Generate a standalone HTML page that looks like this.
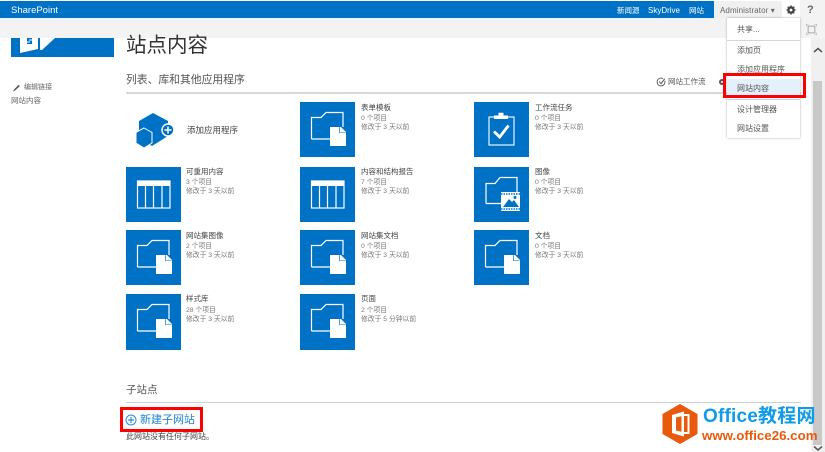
<!DOCTYPE html>
<html lang="zh"><head><meta charset="utf-8"><style>
html,body{margin:0;padding:0}
body{width:825px;height:452px;position:relative;overflow:hidden;background:#fff;font-family:"Liberation Sans","Noto Sans CJK SC",sans-serif;color:#444}
#w{position:absolute;left:0;top:0;width:825px;height:452px;overflow:hidden;filter:blur(.3px)}
.a{position:absolute;white-space:nowrap}
.tile{position:absolute;width:55px;height:55px;background:#0072c6}
.tile svg{position:absolute;left:0;top:0}
.t{position:absolute;font-size:7.500px;line-height:10px;color:#444;white-space:nowrap}
.s{position:absolute;font-size:6.800px;line-height:9px;color:#777;white-space:nowrap}
.m{position:absolute;left:737px;font-size:8px;line-height:10px;color:#555;white-space:nowrap}
</style></head><body><div id="w">
<svg width="0" height="0" style="position:absolute"><defs>
<g id="doc"><path d="M11.500 37V15.500H21L26 10.500H43V25M11.500 37H30" fill="none" stroke="#fff" stroke-width="1.200"/><path fill="#fff" d="M30 25H41L46 30V44H30Z"/><path fill="#0072c6" d="M40 25.500V30.500H45.500L45.500 31H39.300V25Z"/></g>
<g id="tbl"><rect x="11.500" y="14" width="32.500" height="27" fill="none" stroke="#fff" stroke-width="1.200"/><rect x="11" y="14" width="33" height="5" fill="#fff"/><path d="M19.500 19V41M27.500 19V41M36 19V41" stroke="#fff" stroke-width="1.200"/></g>
</defs></svg>

<div class="a" style="left:0;top:1px;width:714px;height:17px;background:#0072c6"></div>
<div class="a" style="left:0;top:18px;width:825px;height:20px;background:#f3f3f3"></div>
<div class="a" style="left:800px;top:0;width:25px;height:18px;background:#f3f3f3"></div>
<div class="a" style="left:714px;top:1px;width:68px;height:17px;background:#f0f0f0"></div>
<div class="a" style="left:11px;top:4px;font-size:9.500px;line-height:14px;color:#fff">SharePoint</div>
<div class="a" style="left:617px;top:4px;font-size:7.500px;line-height:13px;color:#fff">新闻源</div>
<div class="a" style="left:648px;top:4px;font-size:8px;line-height:13px;color:#fff">SkyDrive</div>
<div class="a" style="left:689px;top:4px;font-size:7.500px;line-height:13px;color:#fff">网站</div>
<div class="a" style="left:720px;top:4px;font-size:8px;line-height:13px;color:#666;letter-spacing:.1px">Administrator ▾</div>
<svg class="a" style="left:786px;top:5px" width="10" height="10" viewBox="0 0 12 12"><circle cx="6" cy="6" r="3.300" fill="none" stroke="#444" stroke-width="2.400"/><path d="M6 .5V11.500M.5 6H11.500M2 2L10 10M10 2L2 10" stroke="#444" stroke-width="1.600"/><circle cx="6" cy="6" r="1.700" fill="#fff"/></svg>
<div class="a" style="left:807px;top:3px;font-size:11px;line-height:14px;font-weight:bold;color:#666">?</div>
<svg class="a" style="left:806px;top:24px" width="11" height="11" viewBox="0 0 13 13" fill="none" stroke="#9a9a9a"><rect x="2.500" y="2.500" width="8" height="8"/><path d="M0 3V0H3M10 0H13V3M13 10V13H10M3 13H0V10" stroke-width="1"/></svg>

<div class="a" style="left:11px;top:38px;width:103px;height:19px;background:#0072c6"></div>
<svg class="a" style="left:20px;top:38px" width="36" height="15" viewBox="0 0 36 15"><path d="M0 0H18V11L0 15Z" fill="#fff"/><path d="M20 0H35L22 12H20Z" fill="#fff"/><path d="M7 0H12V1.500H9V2.500H12V6H7V4.500H10V3.500H7Z" fill="#0072c6"/></svg>

<div class="a" style="left:126px;top:33px;font-size:20.500px;line-height:26px;color:#333">站点内容</div>
<div class="a" style="left:126px;top:73px;font-size:10.800px;line-height:15px;color:#555">列表、库和其他应用程序</div>
<div class="a" style="left:126px;top:92px;width:675px;height:2px;background:#d8d8d8"></div>

<svg class="a" style="left:12px;top:84px" width="9" height="8" viewBox="0 0 9 8"><path d="M1 7.500L2 5.500L6.500 1L8 2L3 6.500Z" fill="#555"/></svg>
<div class="a" style="left:24px;top:83px;font-size:7px;line-height:9px;color:#666">编辑链接</div>
<div class="a" style="left:11px;top:96px;font-size:7.500px;line-height:10px;color:#666">网站内容</div>

<svg class="a" style="left:656px;top:77px" width="10" height="10" viewBox="0 0 12 12" fill="none" stroke="#555"><path d="M10.500 4.500A4.700 4.700 0 1 1 8.500 2"/><path d="M4 5.500L6 8L10.500 2" stroke-width="1.200"/></svg>
<div class="a" style="left:668px;top:77px;font-size:7.500px;line-height:10px;color:#555">网站工作流</div>
<svg class="a" style="left:718px;top:78px" width="8" height="8" viewBox="0 0 8 8"><circle cx="4" cy="4" r="3" fill="#555"/><circle cx="4" cy="4" r="1" fill="#fff"/></svg>

<svg class="a" style="left:136px;top:112px" width="42" height="37" viewBox="0 0 42 37"><path d="M17 1L32 9V24L16 34L3 26V9Z" fill="#0072c6"/><path d="M8 16L16 20.500V31L8 36L0 31V20.500Z" fill="#0072c6" stroke="#fff" stroke-width="1"/><circle cx="32" cy="18" r="6" fill="#0072c6" stroke="#fff" stroke-width="1.500"/><path d="M32 14.500V21.500M28.500 18H35.500" stroke="#fff" stroke-width="1.500"/></svg>
<div class="a" style="left:187px;top:125px;font-size:8.500px;line-height:11px;color:#444">添加应用程序</div>

<div class="tile" style="left:300px;top:102px"><svg width="55" height="55"><use href="#doc"/></svg></div>
<div class="t" style="left:361px;top:103px">表单模板</div><div class="s" style="left:361px;top:114px">0 个项目</div><div class="s" style="left:361px;top:123px">修改于 3 天以前</div>

<div class="tile" style="left:474px;top:102px"><svg width="55" height="55"><rect x="15" y="15" width="25" height="28" fill="none" stroke="#fff" stroke-width="1.100"/><path d="M20 17V13.500H24.500V10.700H29.500V13.500H34V17Z" fill="#fff"/><path d="M20 29.500L25.700 35L34.500 23.500" fill="none" stroke="#fff" stroke-width="2.800"/></svg></div>
<div class="t" style="left:535px;top:103px">工作流任务</div><div class="s" style="left:535px;top:114px">0 个项目</div><div class="s" style="left:535px;top:123px">修改于 3 天以前</div>

<div class="tile" style="left:126px;top:167px"><svg width="55" height="55"><use href="#tbl"/></svg></div>
<div class="t" style="left:186px;top:167px">可重用内容</div><div class="s" style="left:186px;top:178px">3 个项目</div><div class="s" style="left:186px;top:187px">修改于 3 天以前</div>

<div class="tile" style="left:300px;top:167px"><svg width="55" height="55"><use href="#tbl"/></svg></div>
<div class="t" style="left:361px;top:167px">内容和结构报告</div><div class="s" style="left:361px;top:178px">7 个项目</div><div class="s" style="left:361px;top:187px">修改于 3 天以前</div>

<div class="tile" style="left:474px;top:167px"><svg width="55" height="55"><path d="M12 36.500V16.500H21L26 10.500H43V25M12 36.500H27" fill="none" stroke="#fff" stroke-width="1.200"/><rect x="27" y="25" width="19" height="19" fill="#fff"/><path d="M27 27H46M27 42H46" stroke="#0072c6" stroke-dasharray="1.500 1" stroke-width="1.500"/><path d="M29 40L35 32L38 35L40 33L45 40Z" fill="#0072c6"/><circle cx="41" cy="30.500" r="1.500" fill="#0072c6"/></svg></div>
<div class="t" style="left:535px;top:167px">图像</div><div class="s" style="left:535px;top:178px">0 个项目</div><div class="s" style="left:535px;top:187px">修改于 3 天以前</div>

<div class="tile" style="left:126px;top:230px"><svg width="55" height="55"><use href="#doc"/></svg></div>
<div class="t" style="left:186px;top:231px">网站集图像</div><div class="s" style="left:186px;top:242px">2 个项目</div><div class="s" style="left:186px;top:251px">修改于 3 天以前</div>

<div class="tile" style="left:300px;top:230px"><svg width="55" height="55"><use href="#doc"/></svg></div>
<div class="t" style="left:361px;top:231px">网站集文档</div><div class="s" style="left:361px;top:242px">0 个项目</div><div class="s" style="left:361px;top:251px">修改于 3 天以前</div>

<div class="tile" style="left:474px;top:230px"><svg width="55" height="55"><use href="#doc"/></svg></div>
<div class="t" style="left:535px;top:231px">文档</div><div class="s" style="left:535px;top:242px">0 个项目</div><div class="s" style="left:535px;top:251px">修改于 3 天以前</div>

<div class="tile" style="left:126px;top:294px;height:56px"><svg width="55" height="55"><use href="#doc"/></svg></div>
<div class="t" style="left:186px;top:294px">样式库</div><div class="s" style="left:186px;top:306px">28 个项目</div><div class="s" style="left:186px;top:315px">修改于 3 天以前</div>

<div class="tile" style="left:300px;top:294px;height:56px"><svg width="55" height="55"><use href="#doc"/></svg></div>
<div class="t" style="left:361px;top:294px">页面</div><div class="s" style="left:361px;top:306px">2 个项目</div><div class="s" style="left:361px;top:315px">修改于 5 分钟以前</div>

<div class="a" style="left:126px;top:383px;font-size:10.500px;line-height:14px;color:#555">子站点</div>
<div class="a" style="left:126px;top:402px;width:675px;height:1px;background:#cfcfcf"></div>
<div class="a" style="left:120px;top:407px;width:83px;height:25px;box-sizing:border-box;border:3px solid #f00"></div>
<svg class="a" style="left:125px;top:414px" width="12" height="12" viewBox="0 0 12 12" fill="none" stroke="#2a8dd4"><circle cx="6" cy="6" r="5"/><path d="M6 3V9M3 6H9" stroke-width="1.200"/></svg>
<div class="a" style="left:140px;top:413px;font-size:11px;line-height:14px;color:#1b85cf">新建子网站</div>
<div class="a" style="left:126px;top:432px;font-size:8px;line-height:10px;color:#444">此网站没有任何子网站。</div>

<div class="a" style="left:811px;top:38px;width:14px;height:414px;background:#f0f0f0"></div>
<div class="a" style="left:813px;top:81px;width:9px;height:364px;background:#c8c8c8"></div>
<svg class="a" style="left:813px;top:47px" width="10" height="7" viewBox="0 0 10 7"><path d="M1 5L5 1.500L9 5" fill="none" stroke="#555" stroke-width="1.500"/></svg>
<svg class="a" style="left:813px;top:445px" width="10" height="7" viewBox="0 0 10 7"><path d="M1 1.500L5 5L9 1.500" fill="none" stroke="#555" stroke-width="1.500"/></svg>

<div class="a" style="left:727px;top:18px;width:73px;height:120px;background:#fff;box-shadow:0 0 2px rgba(0,0,0,.35)"></div>
<div class="a" style="left:727px;top:40px;width:73px;height:1px;background:#d5d5d5"></div>
<div class="a" style="left:727px;top:99px;width:73px;height:1px;background:#d5d5d5"></div>
<div class="a" style="left:727px;top:79px;width:73px;height:19px;background:#e4f0fb"></div>
<div class="m" style="top:25px">共享...</div>
<div class="m" style="top:46px">添加页</div>
<div class="m" style="top:65px">添加应用程序</div>
<div class="m" style="top:84px">网站内容</div>
<div class="m" style="top:105px">设计管理器</div>
<div class="m" style="top:124px">网站设置</div>
<div class="a" style="left:723px;top:73px;width:83px;height:25px;box-sizing:border-box;border:3.500px solid #f00"></div>

<svg class="a" style="left:662px;top:404px" width="36" height="40" viewBox="0 0 36 40"><path d="M18 0L35.500 10V30L18 40L.5 30V10Z" fill="#e8590c"/><path d="M10 11L22 7.500V32.500L10 29Z" fill="#fff"/><path d="M22 11H26.500V29H22" fill="none" stroke="#fff" stroke-width="2"/><path d="M14 13.500L19.500 12.300V27.700L14 26.500Z" fill="#e8590c"/></svg>
<div class="a" style="left:703px;top:405px;font-size:19px;line-height:24px;font-weight:bold;color:#0f9be8;letter-spacing:.2px">Office教程网</div>
<div class="a" style="left:702px;top:428px;font-size:13.300px;line-height:15px;font-weight:bold;color:#e8590c">www.office26.com</div>
</div></body></html>
